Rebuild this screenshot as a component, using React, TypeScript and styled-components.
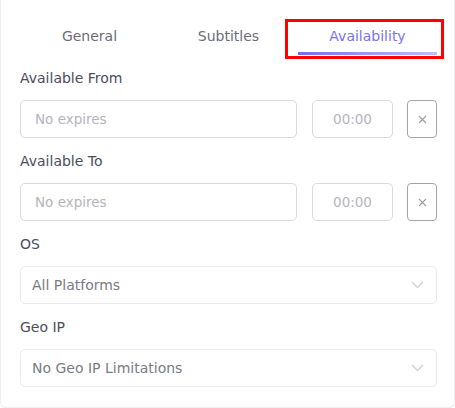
import React from "react";
import styled, { createGlobalStyle } from "styled-components";

const Global = createGlobalStyle`
  html, body { margin: 0; padding: 0; background: #fff; }
  body { font-family: "DejaVu Sans", "Noto Sans", sans-serif; }
  * { box-sizing: border-box; }
`;

const Card = styled.div`
  width: 455px;
  height: 408px;
  border: 1px solid #efeff2;
  border-top: none;
  border-radius: 0 0 6px 6px;
  padding: 26px 17px 0 19px;
  background: #fff;
`;

const Tabs = styled.div`
  display: grid;
  grid-template-columns: repeat(3, 1fr);
  margin-bottom: 13px;
`;

const Tab = styled.div<{ $active?: boolean }>`
  position: relative;
  text-align: center;
  font-size: 14px;
  line-height: 20px;
  color: ${(p) => (p.$active ? "#7a72ee" : "#6c6c7a")};
  &::after {
    content: "";
    display: block;
    height: 3px;
    margin-top: 6px;
    background: ${(p) =>
      p.$active ? "linear-gradient(90deg, #746cef 0%, #a29cf3 55%, #c1bdf7 100%)" : "transparent"};
  }
`;

const Highlight = styled.div`
  position: absolute;
  top: -7px;
  bottom: -4px;
  left: -13px;
  right: -7px;
  border: 3px solid #ff0000;
  pointer-events: none;
`;

const Field = styled.div`
  margin-bottom: 13px;
`;

const Label = styled.div`
  font-size: 14px;
  line-height: 20px;
  color: #4c4c5c;
  margin-bottom: 12px;
`;

const Row = styled.div`
  display: flex;
  align-items: stretch;
`;

const Input = styled.div<{ $w?: number; $center?: boolean }>`
  height: 38px;
  border: 1px solid #dadade;
  border-radius: 5px;
  display: flex;
  align-items: center;
  justify-content: ${(p) => (p.$center ? "center" : "flex-start")};
  padding: 0 14px;
  font-size: 13.5px;
  color: #b4b4bc;
  ${(p) => (p.$w ? `width: ${p.$w}px; flex: none;` : "flex: 1;")}
`;

const ClearButton = styled.div`
  width: 30px;
  height: 38px;
  flex: none;
  margin-left: 14px;
  border: 1px solid #a3a3ab;
  border-radius: 4px;
  display: flex;
  align-items: center;
  justify-content: center;
`;

const Select = styled.div`
  height: 38px;
  border: 1px solid #ebebee;
  border-radius: 5px;
  display: flex;
  align-items: center;
  justify-content: space-between;
  padding: 0 12px 0 11px;
  font-size: 14px;
  color: #7a7a86;
`;

const Spacer = styled.div`
  width: 15px;
  flex: none;
`;

const XIcon = () => (
  <svg width="9" height="9" viewBox="0 0 9 9">
    <path d="M1 1 L8 8 M8 1 L1 8" stroke="#9c9ca4" strokeWidth="1.1" fill="none" />
  </svg>
);

const Chevron = () => (
  <svg width="13" height="8" viewBox="0 0 13 8">
    <path d="M1 1 L6.5 6.5 L12 1" stroke="#d2d2d8" strokeWidth="1.5" fill="none" />
  </svg>
);

const DateRow = () => (
  <Row>
    <Input>No expires</Input>
    <Spacer />
    <Input $w={81} $center>
      00:00
    </Input>
    <ClearButton>
      <XIcon />
    </ClearButton>
  </Row>
);

export default function App() {
  return (
    <>
      <Global />
      <Card>
        <Tabs>
          <Tab>General</Tab>
          <Tab>Subtitles</Tab>
          <Tab $active>
            Availability
            <Highlight />
          </Tab>
        </Tabs>
        <Field>
          <Label>Available From</Label>
          <DateRow />
        </Field>
        <Field>
          <Label>Available To</Label>
          <DateRow />
        </Field>
        <Field>
          <Label>OS</Label>
          <Select>
            All Platforms
            <Chevron />
          </Select>
        </Field>
        <Field>
          <Label>Geo IP</Label>
          <Select>
            No Geo IP Limitations
            <Chevron />
          </Select>
        </Field>
      </Card>
    </>
  );
}
